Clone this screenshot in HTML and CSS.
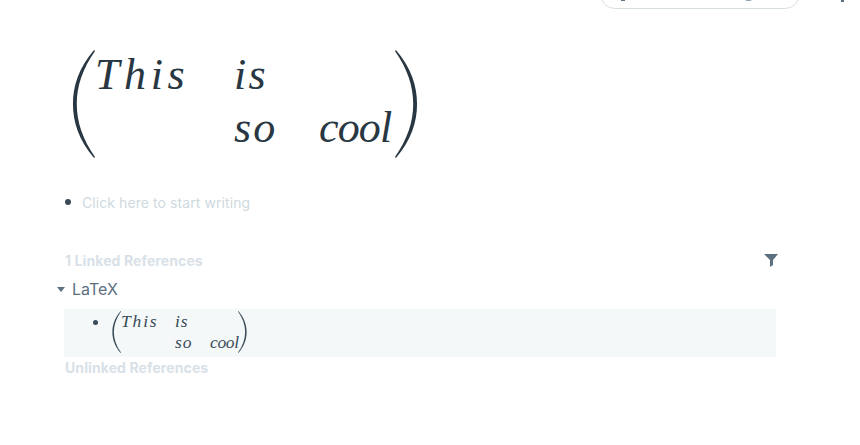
FILE: index.html
```html
<!DOCTYPE html>
<html lang="en">
<head>
  <meta charset="UTF-8">
  <title>LaTeX</title>
  <link rel="stylesheet" href="styles.css">
</head>
<body>
  <div class="topbar">
    <div class="search">
      <span class="search-dot"></span>
      <span class="search-ring"></span>
    </div>
    <span class="top-dot"></span>
  </div>

  <div class="page">
    <div class="matrix matrix-big">
      <svg class="paren" viewBox="0 0 24 108" preserveAspectRatio="none"><path d="M23 0C7 18 1 36 1 54s6 36 22 54l1-1C11 89 5 72 5 54S11 19 24 1z"/></svg>
      <div class="cells">
        <span class="c1">This</span><span class="c2">is</span><span class="c3"></span>
        <span class="c1"></span><span class="c2">so</span><span class="c3">cool</span>
      </div>
      <svg class="paren" viewBox="0 0 24 108" preserveAspectRatio="none"><path d="M1 0c16 18 22 36 22 54s-6 36-22 54l-1-1c13-18 19-35 19-53S13 19 0 1z"/></svg>
    </div>

    <div class="bullet-row">
      <span class="bullet"></span>
      <span class="placeholder">Click here to start writing</span>
    </div>

    <div class="refs-head">
      <span class="refs-title">1 Linked References</span>
      <svg class="filter" viewBox="0 0 14 14"><path d="M0 1h14L9 7v5l-3 2V7z"/></svg>
    </div>

    <div class="page-link">
      <span class="caret"></span>
      <span>LaTeX</span>
    </div>

    <div class="ref-block">
      <span class="bullet bullet-small"></span>
      <div class="matrix matrix-small">
        <svg class="paren" viewBox="0 0 24 108" preserveAspectRatio="none"><path d="M23 0C7 18 1 36 1 54s6 36 22 54l1-1C11 89 5 72 5 54S11 19 24 1z"/></svg>
        <div class="cells">
          <span class="c1">This</span><span class="c2">is</span><span class="c3"></span>
          <span class="c1"></span><span class="c2">so</span><span class="c3">cool</span>
        </div>
        <svg class="paren" viewBox="0 0 24 108" preserveAspectRatio="none"><path d="M1 0c16 18 22 36 22 54s-6 36-22 54l-1-1c13-18 19-35 19-53S13 19 0 1z"/></svg>
      </div>
    </div>

    <div class="refs-title">Unlinked References</div>
  </div>
</body>
</html>
```

FILE: styles.css
```css
body {
  margin: 0;
  background-color: #fff;
  font-family: Inter, "Liberation Sans", sans-serif;
  color: #293742;
  overflow: hidden;
}

.topbar {
  height: 9px;
  display: flex;
  justify-content: flex-end;
  align-items: flex-end;
  padding-right: 16px;
  overflow: hidden;
}

.search {
  width: 200px;
  height: 30px;
  flex: none;
  display: flex;
  justify-content: space-between;
  align-items: flex-end;
  padding: 0 47px 7px 20px;
  box-sizing: border-box;
  border: 1px solid #d8dfe3;
  border-radius: 15px;
}

.search-dot {
  width: 4px;
  height: 2px;
  background-color: #5c7080;
}

.search-ring {
  width: 7px;
  height: 2px;
  border-bottom: 1px solid #8a9ba8;
  border-radius: 50%;
}

.top-dot {
  flex: none;
  width: 3px;
  height: 2px;
  margin: 0 0 7px 41px;
  background-color: #5c7080;
}

.page {
  width: 712px;
  margin-left: 65px;
}

.matrix {
  display: flex;
  font-family: "Liberation Serif", serif;
  font-style: italic;
  color: #293742;
}

.paren {
  fill: currentColor;
  flex: none;
}

.cells {
  display: grid;
  align-content: start;
}

.c1 {
  letter-spacing: 0.105em;
}

.c2 {
  letter-spacing: 0.05em;
}

.c3 {
  letter-spacing: -0.02em;
}

.matrix-big {
  margin: 41px 0 0 7px;
  height: 108px;
  font-size: 44px;
}

.matrix-big .paren {
  width: 23px;
  height: 108px;
}

.matrix-big .cells {
  grid-template-columns: 139px 85px 76px;
  grid-auto-rows: 53px;
  line-height: 50px;
  width: 300px;
}

.bullet-row {
  display: flex;
  align-items: center;
  margin-top: 36px;
  height: 16px;
}

.bullet {
  width: 6px;
  height: 6px;
  border-radius: 50%;
  background-color: #394b59;
  flex: none;
}

.placeholder {
  margin-left: 11px;
  font-size: 14px;
  letter-spacing: 0.08px;
  color: #ced9e0;
}

.refs-head {
  display: flex;
  justify-content: space-between;
  align-items: center;
  margin-top: 41px;
  height: 18px;
}

.refs-title {
  font-size: 14px;
  font-weight: 700;
  letter-spacing: 0.1px;
  color: #d8e1e8;
}

.filter {
  width: 14px;
  height: 14px;
  margin-right: -1px;
  fill: #5c7080;
}

.page-link {
  display: flex;
  align-items: center;
  margin: 10px 0 0 -8px;
  height: 20px;
  font-size: 16px;
  color: #5c7080;
}

.caret {
  width: 0;
  height: 0;
  margin-right: 7px;
  border-left: 4.5px solid transparent;
  border-right: 4.5px solid transparent;
  border-top: 5px solid #5c7080;
}

.ref-block {
  display: flex;
  align-items: flex-start;
  height: 48px;
  margin: 10px 1px 0 -1px;
  padding-left: 29px;
  background-color: #f4f8f9;
}

.bullet-small {
  width: 5px;
  height: 5px;
  margin-top: 11px;
}

.matrix-small {
  margin: 2px 0 0 14px;
  height: 42px;
  font-size: 17.5px;
  color: #394b59;
}

.matrix-small .paren {
  width: 9px;
  height: 42px;
}

.matrix-small .cells {
  grid-template-columns: 54px 35px 29px;
  grid-auto-rows: 21px;
  line-height: 20px;
  width: 117px;
}

.ref-block + .refs-title {
  margin-top: 1px;
  line-height: 20px;
}
```
